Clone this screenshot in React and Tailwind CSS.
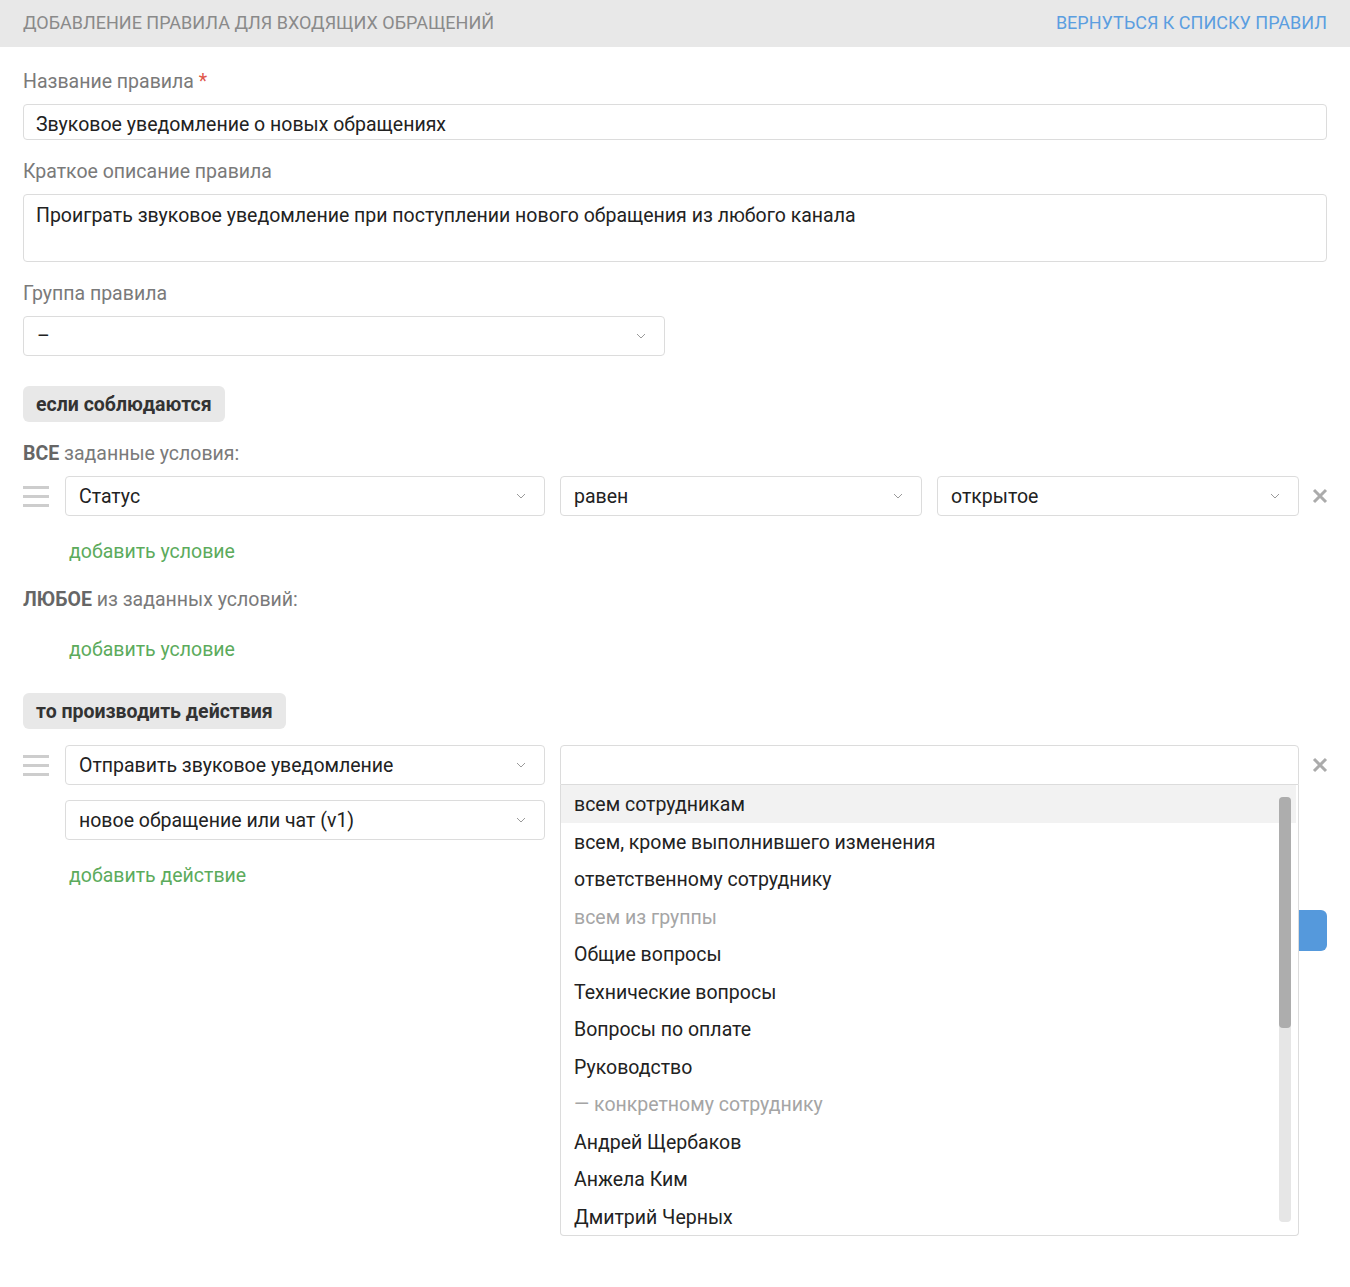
import * as React from "react";

const Chevron = () => (
  <svg width="10" height="6" viewBox="0 0 10 6" className="shrink-0">
    <polyline points="1,1 5,5 9,1" fill="none" stroke="#9a9a9a" strokeWidth="1" />
  </svg>
);

const Handle = () => (
  <div className="flex w-[26px] shrink-0 flex-col gap-[6px] pt-[10px]">
    <div className="h-[3px] bg-[#cdcdcd]" />
    <div className="h-[3px] bg-[#cdcdcd]" />
    <div className="h-[3px] bg-[#cdcdcd]" />
  </div>
);

const Remove = () => (
  <div className="flex h-[40px] w-[29px] shrink-0 items-center justify-end">
    <svg width="16" height="16" viewBox="0 0 16 16">
      <path d="M2 2 L14 14 M14 2 L2 14" stroke="#ababab" strokeWidth="3" />
    </svg>
  </div>
);

function Select({ value, className }) {
  return (
    <div
      className={
        "flex h-[40px] shrink-0 items-center justify-between rounded-[4px] border border-[#dcdcdc] bg-white pl-[13px] pr-[18px] text-[#222] " +
        className
      }
    >
      <span className="pt-[2px]">{value}</span>
      <Chevron />
    </div>
  );
}

const options = [
  { text: "всем сотрудникам", active: true },
  { text: "всем, кроме выполнившего изменения" },
  { text: "ответственному сотруднику" },
  { text: "всем из группы", muted: true },
  { text: "Общие вопросы" },
  { text: "Технические вопросы" },
  { text: "Вопросы по оплате" },
  { text: "Руководство" },
  { text: "— конкретному сотруднику", muted: true },
  { text: "Андрей Щербаков" },
  { text: "Анжела Ким" },
  { text: "Дмитрий Черных" },
];

export default function App() {
  return (
    <div className="min-h-[1287px] bg-white font-['Roboto',sans-serif] text-[19.5px]">
      <div className="flex h-[47px] items-center justify-between bg-[#e8e8e8] px-[23px] pb-[2px] text-[18px] uppercase">
        <span className="text-[#8a8a8a]">Добавление правила для входящих обращений</span>
        <span className="text-[#5b9ee0]">Вернуться к списку правил</span>
      </div>

      <div className="px-[23px]">
        <div className="mt-[22px] h-[24px] leading-[26px] text-[#7a7a7a]">
          Название правила <span className="text-[#e0564a]">*</span>
        </div>
        <div className="mt-[11px] flex h-[36px] items-center rounded-[4px] border border-[#dcdcdc] px-[12px] pt-[5px] text-[#222]">
          Звуковое уведомление о новых обращениях
        </div>

        <div className="mt-[19px] h-[24px] leading-[26px] text-[#7a7a7a]">Краткое описание правила</div>
        <div className="mt-[11px] h-[68px] rounded-[4px] border border-[#dcdcdc] px-[12px] pt-[9px] leading-[24px] text-[#222]">
          Проиграть звуковое уведомление при поступлении нового обращения из любого канала
        </div>

        <div className="mt-[19px] h-[24px] leading-[26px] text-[#7a7a7a]">Группа правила</div>
        <Select value="–" className="mt-[11px] w-[642px]" />

        <div className="mt-[30px] inline-flex h-[36px] items-center rounded-[6px] bg-[#e8e8e8] px-[13px] pt-[2px] font-bold text-[#333]">
          если соблюдаются
        </div>

        <div className="mt-[19px] h-[24px] leading-[26px] text-[#7a7a7a]">
          <b className="text-[#666]">ВСЕ</b> заданные условия:
        </div>
        <div className="mt-[11px] flex">
          <Handle />
          <Select value="Статус" className="ml-[16px] w-[480px]" />
          <Select value="равен" className="ml-[15px] w-[362px]" />
          <Select value="открытое" className="ml-[15px] w-[362px]" />
          <Remove />
        </div>
        <div className="ml-[46px] mt-[23px] h-[24px] leading-[26px] text-[#5cab5c]">добавить условие</div>

        <div className="mt-[24px] h-[24px] leading-[26px] text-[#7a7a7a]">
          <b className="text-[#666]">ЛЮБОЕ</b> из заданных условий:
        </div>
        <div className="ml-[46px] mt-[26px] h-[24px] leading-[26px] text-[#5cab5c]">добавить условие</div>

        <div className="mt-[32px] inline-flex h-[36px] items-center rounded-[6px] bg-[#e8e8e8] px-[13px] pt-[2px] font-bold text-[#333]">
          то производить действия
        </div>

        <div className="mt-[16px] flex">
          <Handle />
          <div className="ml-[16px] flex w-[480px] shrink-0 flex-col">
            <Select value="Отправить звуковое уведомление" className="w-full" />
            <Select value="новое обращение или чат (v1)" className="mt-[15px] w-full" />
            <div className="ml-[4px] mt-[23px] h-[24px] leading-[26px] text-[#5cab5c]">добавить действие</div>
          </div>
          <div className="relative ml-[15px] w-[739px] shrink-0">
            <div className="h-[40px] rounded-t-[4px] border border-[#dcdcdc] bg-white" />
            <div className="absolute left-0 top-[40px] z-10 h-[451px] w-full overflow-hidden rounded-b-[4px] border border-t-0 border-[#dcdcdc] bg-white">
              {options.map((o) => (
                <div
                  key={o.text}
                  className={
                    "flex h-[37.5px] items-center px-[13px] pt-[2px] " +
                    (o.active ? "bg-[#f2f2f2] mr-[2px] " : "") +
                    (o.muted ? "text-[#a5a5a5]" : "text-[#222]")
                  }
                >
                  {o.text}
                </div>
              ))}
              <div className="absolute right-[7px] top-[12px] h-[425px] w-[12px] rounded-[4px] bg-[#e6e6e6]">
                <div className="h-[231px] rounded-[4px] bg-[#adadad]" />
              </div>
            </div>
          </div>
          <Remove />
        </div>

        <div className="mt-[23px] flex justify-end">
          <div className="flex h-[41px] w-[200px] items-center justify-center rounded-[6px] bg-[#5599dc] text-white">
            Сохранить
          </div>
        </div>
      </div>
    </div>
  );
}
